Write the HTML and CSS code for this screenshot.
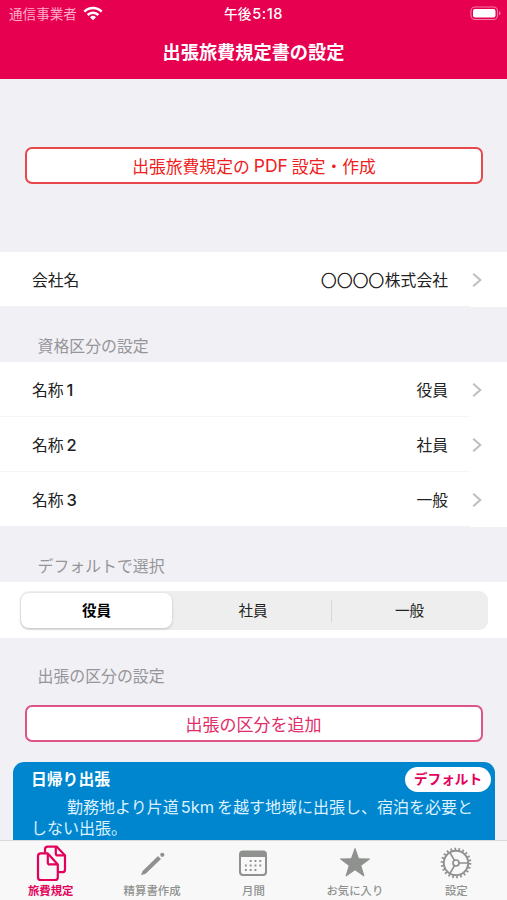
FILE: index.html
```html
<!DOCTYPE html>
<html lang="ja">
<head>
<meta charset="utf-8">
<title>出張旅費規定書の設定</title>
<link rel="stylesheet" href="styles.css">
</head>
<body>
<div class="app">
  <header class="header">
    <div class="status">
      <div class="carrier"><span>通信事業者</span>
        <svg class="wifi" viewBox="0 0 20 15" width="20" height="15"><g fill="none" stroke="#fff" stroke-width="2.5"><path d="M1.3 5.6a12.4 12.4 0 0 1 17.4 0"/><path d="M4.6 9a7.8 7.8 0 0 1 10.8 0"/></g><path fill="#fff" d="M7 11.2a4.4 4.4 0 0 1 6 0L10 14.2z"/></svg>
      </div>
      <div class="clock">午後<span class="time">5:18</span></div>
      <svg class="battery" viewBox="0 0 31 15" width="31" height="15"><rect x="1" y="1" width="26.5" height="12.5" rx="4" fill="none" stroke="#f47ba5" stroke-width="1.1"/><rect x="3" y="3" width="22.5" height="8.5" rx="2" fill="#fff"/><path d="M29 5v4.6q1.5-.8 1.5-2.3T29 5z" fill="#f47ba5"/></svg>
    </div>
    <h1 class="title">出張旅費規定書の設定</h1>
  </header>
  <main class="content">
    <button class="outline red">出張旅費規定の<span class="latin">PDF</span>設定・作成</button>
    <section class="rows company">
      <div class="row"><span>会社名</span><span class="value"><span class="rings">◯◯◯◯</span>株式会社</span><svg class="chev" viewBox="0 0 10 16" width="10" height="16"><path d="M1.2 1.8 8.3 8l-7.1 6.2"/></svg></div>
    </section>
    <h2 class="caption">資格区分の設定</h2>
    <section class="rows">
      <div class="row"><span>名称<span class="num">1</span></span><span class="value">役員</span><svg class="chev" viewBox="0 0 10 16" width="10" height="16"><path d="M1.2 1.8 8.3 8l-7.1 6.2"/></svg></div>
      <div class="row"><span>名称<span class="num">2</span></span><span class="value">社員</span><svg class="chev" viewBox="0 0 10 16" width="10" height="16"><path d="M1.2 1.8 8.3 8l-7.1 6.2"/></svg></div>
      <div class="row"><span>名称<span class="num">3</span></span><span class="value">一般</span><svg class="chev" viewBox="0 0 10 16" width="10" height="16"><path d="M1.2 1.8 8.3 8l-7.1 6.2"/></svg></div>
    </section>
    <h2 class="caption">デフォルトで選択</h2>
    <section class="segment-row">
      <div class="segment"><span class="seg on">役員</span><span class="seg middle">社員</span><span class="divider"></span><span class="seg">一般</span></div>
    </section>
    <h2 class="caption last">出張の区分の設定</h2>
    <button class="outline pink">出張の区分を追加</button>
    <article class="card">
      <div class="card-head"><h3 class="card-title">日帰り出張</h3><span class="badge">デフォルト</span></div>
      <p class="desc">勤務地より片道<span class="km">5km</span>を越す地域に出張し、宿泊を必要と<br>しない出張。</p>
    </article>
  </main>
  <nav class="tabs">
    <div class="tab active">
      <svg viewBox="0 0 36 38" width="36" height="38"><g fill="none" stroke="#e4005a" stroke-width="2.2" stroke-linejoin="round" stroke-linecap="round"><path d="M12 8V5.4Q12 2.6 14.8 2.6H23.6l8.4 8.8v14q0 2.8-2.8 2.8H26"/><path d="M22.8 3.2v6.2q0 2 2 2h6.7"/><path fill="#f8f8f8" d="M7.8 9.4h7l10 11v12.800q0 2.800-2.800 2.800H7.800Q5 36 5 33.200v-21q0-2.800 2.800-2.800z"/><path d="M14.800 10v8.400q0 2 2 2h7.400"/></g></svg>
      <span>旅費規定</span></div>
    <div class="tab">
      <svg viewBox="0 0 36 38" width="36" height="38"><g fill="#8f918f"><path d="m8.600 27 15.400-15 3 3-15.400 14.800L7 31.200z"/><circle cx="28.300" cy="10.800" r="2.100"/></g></svg>
      <span>精算書作成</span></div>
    <div class="tab">
      <svg viewBox="0 0 36 38" width="36" height="38"><path fill="#8f918f" fill-rule="evenodd" d="M8 6.500h20q4 0 4 4V28q0 4-4 4H8q-4 0-4-4V10.500q0-4 4-4zM6 13v14.800q0 2.200 2.200 2.200h19.600q2.200 0 2.200-2.200V13z"/><path stroke="#8f918f" stroke-width="1.900" stroke-dasharray="1.900 2.900" d="M14.700 17h12M9.900 21.500h16.800M9.900 26h12"/></svg>
      <span>月間</span></div>
    <div class="tab">
      <svg viewBox="0 0 36 38" width="36" height="38"><path fill="#8f918f" stroke="#8f918f" stroke-linejoin="round" d="m18 4.500 3.600 10.300 11 .2-8.800 6.600 3.200 10.500L18 25.800l-9 6.300 3.200-10.500L3.400 15l11-.2z"/></svg>
      <span>お気に入り</span></div>
    <div class="tab">
      <svg viewBox="0 0 36 38" width="36" height="38"><g fill="none" stroke="#8f918f"><circle cx="18" cy="19" r="12.200" stroke-width="1.900"/><circle cx="18" cy="19" r="14" stroke-width="2.600" stroke-dasharray="1.700 2.298"/><circle cx="18" cy="19" r="3" stroke-width="1.700"/><path stroke-width="1.700" d="M21 19h9.300M16.500 16.400 11.800 8.400M16.500 21.600l-4.700 8"/></g></svg>
      <span>設定</span></div>
  </nav>
</div>
</body>
</html>
```

FILE: styles.css
```css
* { box-sizing: border-box; }
body { margin: 0; font-family: Inter, "Noto Sans CJK JP", sans-serif; color: #222; }
h1, h2, h3, p { margin: 0; font-weight: 400; }
.app { width: 507px; height: 900px; display: flex; flex-direction: column; overflow: hidden; background: #f1f0f5; }
.header { flex: none; height: 79px; background: #e70050; color: #fff; }
.status { height: 27px; display: grid; grid-template-columns: 1fr auto 1fr; align-items: center; padding: 0 6px; }
.carrier { display: flex; align-items: center; gap: 6px; padding-left: 3px; font-size: 13.6px; line-height: 20px; color: #ffabc8; }
.clock { font-size: 13.6px; font-weight: 500; line-height: 20px; }
.time { margin-left: 1px; font-size: 14.6px; letter-spacing: .5px; }
.battery { justify-self: end; }
.title { height: 51px; line-height: 51px; text-align: center; font-size: 18.2px; font-weight: 600; }
.content { flex: 1; min-height: 0; overflow: hidden; display: flex; flex-direction: column; }
.outline { display: flex; align-items: center; justify-content: center; flex: none; height: 37px; margin: 0 24px 0 25px; padding: 0; background: #fff; border-radius: 7px; font: inherit; font-size: 16.8px; white-space: pre; }
.red { margin-top: 68px; color: #ee2020; border: 2px solid #e8474b; }
.latin { font-size: 17.5px; margin: 0 4px; }
.rows { flex: none; background: #fff; }
.company { margin-top: 68px; }
.row { height: 55px; display: flex; align-items: center; padding: 0 25px 0 32px; font-size: 15.8px; background: linear-gradient(#f5f5f7, #f5f5f7) left bottom / 470px 1px no-repeat; }
.row:last-child { background-color: #fff; background-image: linear-gradient(#f1f0f5, #f1f0f5); }
.num { margin-left: 3px; font-size: 16.5px; font-weight: 500; }
.value { margin-left: auto; margin-right: 24px; }
.rings { font-family: "Noto Sans CJK JP", sans-serif; font-size: 14.6px; letter-spacing: 1.2px; -webkit-text-stroke: .7px #222; }
.chev { fill: none; stroke: #bebebe; stroke-width: 2; }
.caption { flex: none; height: 55px; padding: 22px 0 0 37.5px; font-size: 15.9px; line-height: 36px; color: #96969a; }
.caption.last { padding-top: 21px; }
.segment-row { flex: none; height: 56px; padding: 9px 19px 8px 20px; background: #fff; }
.segment { height: 39px; display: flex; align-items: center; padding: 2px 1px; background: #eee; border-radius: 9px; font-size: 14.6px; }
.seg { flex: 1; text-align: center; line-height: 36px; }
.seg.middle { flex: none; width: 159px; padding-left: 3px; }
.seg.on { flex: none; width: 151px; height: 35px; background: #fff; border-radius: 8px; font-weight: 700; color: #000; box-shadow: 0 1px 3px rgba(0, 0, 0, .2); }
.divider { width: 1px; height: 22px; background: #d6d6d8; }
.pink { margin-top: 12px; padding-right: 1px; color: #e12d68; border: 2px solid #dd5584; font-size: 17px; }
.card { flex: none; height: 100px; margin: 20px 12px 0 13px; padding: 5px 4px 0 18px; background: #0086cf; border-radius: 11px; color: #fff; }
.card-head { display: flex; height: 25px; justify-content: space-between; align-items: center; }
.card-title { font-size: 15.8px; font-weight: 700; line-height: 24px; }
.badge { width: 86px; height: 25px; border-radius: 13px; background: #fff; color: #e4005a; font-size: 13.6px; font-weight: 700; line-height: 24px; text-align: center; }
.desc { margin-top: 5px; text-indent: 36px; font-size: 16px; line-height: 21px; white-space: nowrap; color: #dcf1ff; }
.km { margin: 0 3px 0 2px; font-size: 16.4px; }
.tabs { flex: none; height: 60px; border-top: 1px solid #d9d9dc; background: #f8f8f8; display: grid; grid-template-columns: repeat(5, 1fr); }
.tab { display: flex; flex-direction: column; align-items: center; padding-top: 3px; font-size: 11.4px; line-height: 18px; font-weight: 500; color: #8f918f; }
.active { color: #e4005a; font-weight: 700; }
```
